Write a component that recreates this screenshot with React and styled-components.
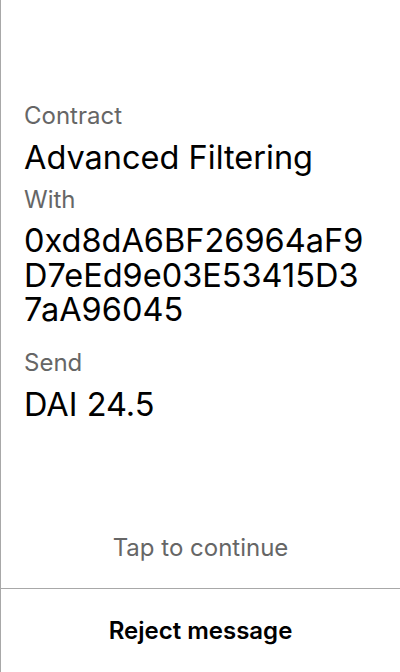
import React from "react";
import styled, { createGlobalStyle } from "styled-components";

const Global = createGlobalStyle`
  html, body { margin: 0; padding: 0; background: #ffffff; }
  body { font-family: Inter, "Noto Sans", "Liberation Sans", sans-serif; }
  * { box-sizing: border-box; }
`;

const Screen = styled.div`
  height: 672px;
  display: flex;
  flex-direction: column;
  background: #ffffff;
  border-left: 1px solid #a8a8a8;
`;

const Details = styled.div`
  flex: 1;
  display: flex;
  flex-direction: column;
  gap: 10px;
  padding: 101px 31px 0 23px;
`;

const Label = styled.div`
  font-size: 24px;
  line-height: 29px;
  color: #666666;
  font-weight: 400;
`;

const Value = styled.div`
  font-size: 32.5px;
  line-height: ${(p) => (p.$mono ? "34.5px" : "35px")};
  color: #000000;
  font-weight: 400;
  word-break: break-all;
  margin-bottom: ${(p) => (p.$extra ? "10px" : "0")};
`;

const Hint = styled.div`
  font-size: 24px;
  line-height: 29px;
  color: #666666;
  text-align: center;
  padding-bottom: 26px;
`;

const RejectButton = styled.button`
  height: 84px;
  border: none;
  border-top: 1px solid #a8a8a8;
  background: #ffffff;
  font-family: inherit;
  font-size: 24px;
  line-height: 29px;
  font-weight: 600;
  color: #000000;
  display: flex;
  align-items: center;
  justify-content: center;
  padding: 0;
  cursor: pointer;
`;

const rows = [
  { label: "Contract", value: "Advanced Filtering" },
  { label: "With", value: "0xd8dA6BF26964aF9D7eEd9e03E53415D37aA96045", mono: true, extra: true },
  { label: "Send", value: "DAI 24.5" },
];

export default function App() {
  return (
    <>
      <Global />
      <Screen>
        <Details>
          {rows.map((r) => (
            <React.Fragment key={r.label}>
              <Label>{r.label}</Label>
              <Value $mono={r.mono} $extra={r.extra}>{r.value}</Value>
            </React.Fragment>
          ))}
        </Details>
        <Hint>Tap to continue</Hint>
        <RejectButton>Reject message</RejectButton>
      </Screen>
    </>
  );
}
